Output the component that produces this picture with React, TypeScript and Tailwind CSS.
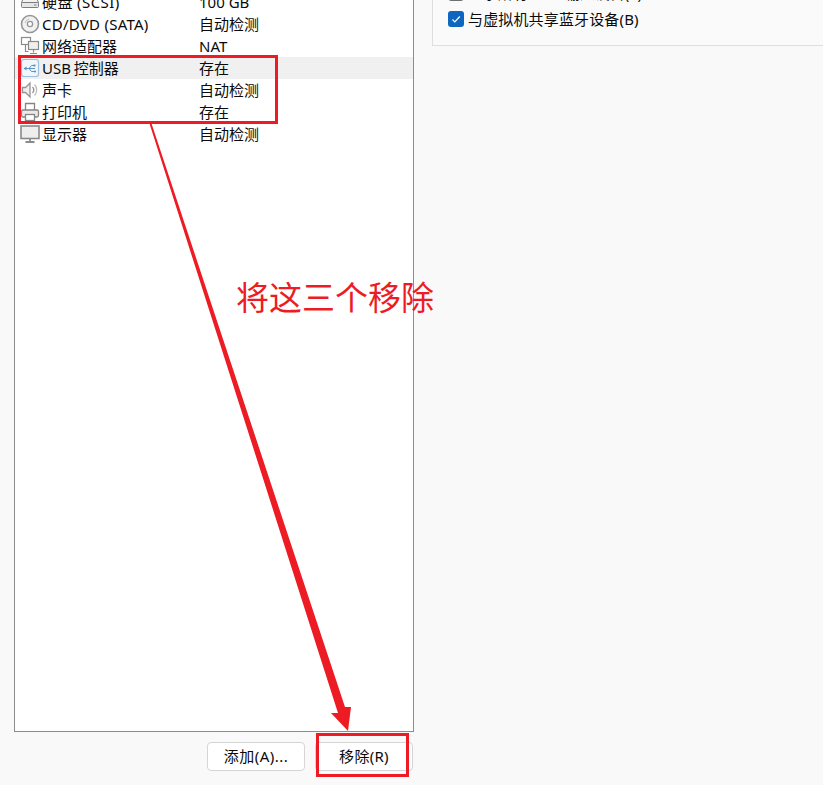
const HardDisk = () => (
  <svg width="20" height="20" viewBox="0 0 20 20" fill="none" stroke="#7d7d7d" strokeWidth="1">
    <path d="M4.5 3.5h11l3 7H1.5z" fill="#f2f2f2" />
    <rect x="1.5" y="10.5" width="17" height="5" rx="1" fill="#e6e6e6" />
    <path d="M14 13h2.5" />
  </svg>
);
const Disc = () => (
  <svg width="20" height="20" viewBox="0 0 20 20" fill="none" stroke="#969696">
    <circle cx="10" cy="10" r="8.5" strokeWidth="1.6" fill="#f1f1f1" />
    <circle cx="10" cy="10" r="2.6" strokeWidth="1.3" fill="#fff" />
    <path d="M5 9a5 5 0 0 1 4-4" stroke="#bdbdbd" />
  </svg>
);
const Network = () => (
  <svg width="20" height="20" viewBox="0 0 20 20" fill="none" stroke="#8a8a8a" strokeWidth="1.2">
    <rect x="1.500" y="1.500" width="9" height="7" fill="#fff" />
    <rect x="8.500" y="5.500" width="10" height="8" fill="#efefef" />
    <path d="M13.500 13.500v3M10 17.500h7M5.500 8.500v7h3" />
  </svg>
);
const Usb = () => (
  <svg width="20" height="20" viewBox="0 0 20 20" fill="none">
    <rect x="1.500" y="1.500" width="17" height="17" rx="2.500" fill="#f1f6fb" stroke="#9dbfdc" strokeWidth="1.200" />
    <path d="M5 10.500h10M9 10.500l2.500-3H14M9 10.500l2.500 3H14" stroke="#5f93c0" />
    <path d="M6.500 8.500v4L3.500 10.500z" fill="#5f93c0" />
    <rect x="13.500" y="6.500" width="2" height="2" fill="#5f93c0" />
    <circle cx="15" cy="13.500" r="1.100" fill="#5f93c0" />
  </svg>
);
const Speaker = () => (
  <svg width="20" height="20" viewBox="0 0 20 20" fill="none" stroke="#959595" strokeWidth="1.300">
    <path d="M2.500 7.500h3l4.500-4.500v14l-4.500-4.500h-3z" fill="#efefef" />
    <path d="M12.500 7a4.500 4.500 0 0 1 0 6" />
    <path d="M14.500 4.500a8 8 0 0 1 0 11" stroke="#bcbcbc" />
  </svg>
);
const Printer = () => (
  <svg width="20" height="20" viewBox="0 0 20 20" fill="none" stroke="#858585" strokeWidth="1.300">
    <path d="M5.500 8V1.500h9V8" fill="#fff" />
    <rect x="1.500" y="8" width="17" height="7" rx="1.500" fill="#e9e9e9" />
    <rect x="5.500" y="12.500" width="9" height="6" fill="#fff" />
  </svg>
);
const Monitor = () => (
  <svg width="20" height="20" viewBox="0 0 20 20" fill="none" stroke="#8a8a8a" strokeWidth="1.600">
    <rect x="1" y="2" width="18" height="12.500" fill="#eeeeee" />
    <path d="M10 14.500v3M5.500 18h9" strokeWidth="1.800" />
  </svg>
);

const rows = [
  { icon: <HardDisk />, name: "硬盘 (SCSI)", value: "100 GB", extra: "tracking-[0.4px]" },
  { icon: <Disc />, name: "CD/DVD (SATA)", value: "自动检测", extra: "tracking-[0.25px]" },
  { icon: <Network />, name: "网络适配器", value: "NAT", extra: "" },
  { icon: <Usb />, name: "USB 控制器", value: "存在", active: true, extra: "[word-spacing:-1px]" },
  { icon: <Speaker />, name: "声卡", value: "自动检测", extra: "" },
  { icon: <Printer />, name: "打印机", value: "存在", extra: "" },
  { icon: <Monitor />, name: "显示器", value: "自动检测", extra: "" },
];

export default function App() {
  return (
    <div className="relative w-[823px] h-[785px] overflow-hidden bg-[#f9f9f9] text-[15px] text-[#0a0a0a] font-['Noto_Sans','Noto_Sans_CJK_SC',sans-serif]">
      <div className="flex items-start">
        <div className="ml-[14px] w-[400px] flex flex-col">
          <div className="h-[741px] -mt-[9px] bg-white border border-t-0 border-[#8c8c8c]">
            {rows.map((r) => (
              <div
                key={r.name}
                className={`flex items-center h-[22px] leading-[20px] pl-[5px] pb-[1px] ${r.active ? "bg-[#f0f0f0]" : ""}`}
              >
                <span className="w-[22px] shrink-0 flex items-center">{r.icon}</span>
                <span className={`w-[157px] shrink-0 whitespace-nowrap ${r.extra}`}>{r.name}</span>
                <span className="whitespace-nowrap">{r.value}</span>
              </div>
            ))}
          </div>
          <div className="flex justify-end gap-[10px] mt-[10px] pr-[1px]">
            <button className="w-[98px] h-[29px] bg-white border border-[#d5d5d5] rounded-[4px] text-[15px] leading-none tracking-[0.5px]">
              添加(A)...
            </button>
            <button className="w-[98px] h-[29px] bg-white border border-[#d5d5d5] rounded-[4px] text-[15px] leading-none tracking-[0.3px]">
              移除(R)
            </button>
          </div>
        </div>
        <div className="ml-[18px] flex-1 -mt-[19px] h-[65px] bg-[#fafafa] border border-r-0 border-[#dedede] pl-[15px] pt-[3px] flex flex-col gap-[10px]">
          <div className="flex items-center h-[16px] gap-[4px]">
            <span className="w-[16px] h-[16px] rounded-[3px] bg-white border border-[#6f6f6f] shrink-0" />
            <span className="whitespace-nowrap">显示所有 USB 输入设备(S)</span>
          </div>
          <div className="flex items-center h-[16px] gap-[4px]">
            <span className="w-[16px] h-[16px] rounded-[3px] bg-[#0f66c0] flex items-center justify-center shrink-0">
              <svg width="10" height="10" viewBox="0 0 10 10" fill="none" stroke="#fff" strokeWidth="1.200">
                <path d="M1.500 5.500l2.300 2.300 5-5.300" />
              </svg>
            </span>
            <span className="whitespace-nowrap tracking-[0.15px]">与虚拟机共享蓝牙设备(B)</span>
          </div>
        </div>
      </div>

      {/* annotations */}
      <div className="absolute left-[18px] top-[55px] w-[260px] h-[69px] border-[3px] border-[#ed1c24]" />
      <div className="absolute left-[316px] top-[733px] w-[93px] h-[44px] border-[3px] border-[#ed1c24]" />
      <div className="absolute left-[236px] top-[272px] text-[33px] leading-[48px] text-[#ed1c24] whitespace-nowrap font-['Noto_Sans_CJK_SC',sans-serif]">
        将这三个移除
      </div>
      <svg className="absolute left-0 top-0 pointer-events-none" width="823" height="785" viewBox="0 0 823 785">
        <path d="M149 122 L151 122 L345 707 L351 707 L348 731 L331 713 L338 713 Z" fill="#ed1c24" />
      </svg>
    </div>
  );
}
